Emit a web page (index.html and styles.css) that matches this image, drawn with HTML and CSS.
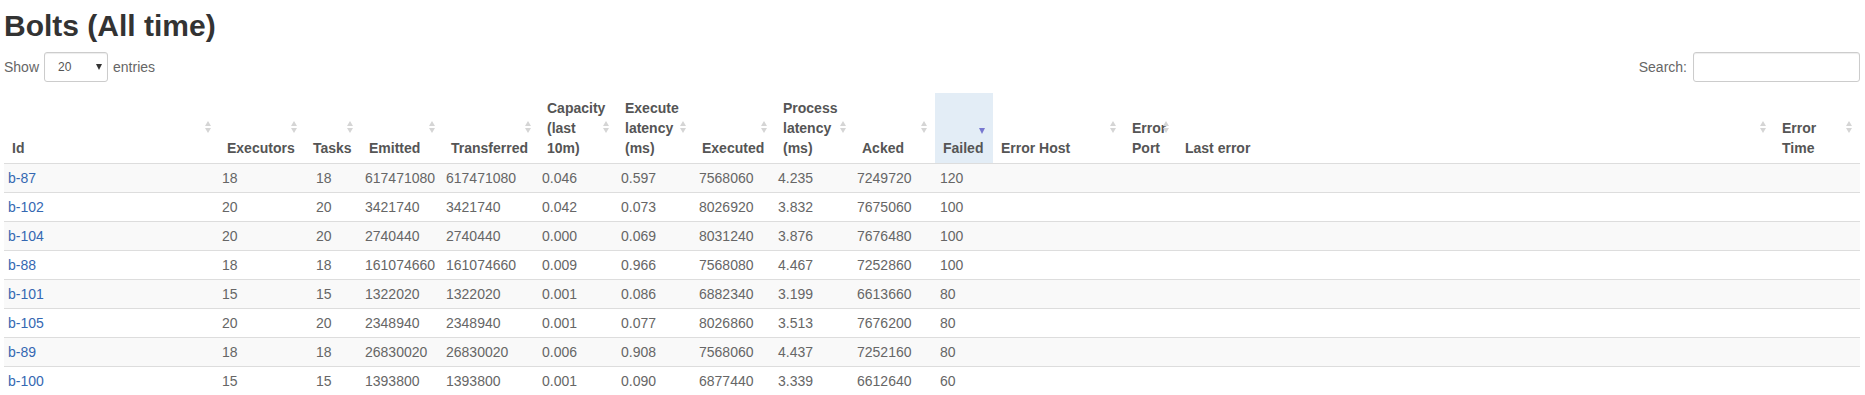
FILE: index.html
```html
<!DOCTYPE html>
<html lang="en">
<head>
<meta charset="utf-8">
<title>Bolts (All time)</title>
<link rel="stylesheet" href="styles.css">
</head>
<body>
<div class="page">
  <h2 class="title">Bolts (All time)</h2>
  <div class="controls">
    <label class="length">Show<span class="select-wrap"><select class="select"><option>20</option></select></span>entries</label>
    <label class="filter">Search:<input class="search" type="search"></label>
  </div>
  <div class="dt">
    <table class="dt-head">
      <colgroup>
        <col class="c-id"><col class="c-exec"><col class="c-tasks"><col class="c-emit"><col class="c-trans"><col class="c-cap"><col class="c-elat"><col class="c-executed"><col class="c-plat"><col class="c-acked"><col class="c-failed"><col class="c-ehost"><col class="c-eport"><col class="c-lerr"><col class="c-etime">
      </colgroup>
      <thead>
        <tr>
          <th class="sort">Id</th>
          <th class="sort">Executors</th>
          <th class="sort">Tasks</th>
          <th class="sort">Emitted</th>
          <th class="sort">Transferred</th>
          <th class="sort">Capacity (last 10m)</th>
          <th class="sort">Execute latency (ms)</th>
          <th class="sort">Executed</th>
          <th class="sort">Process latency (ms)</th>
          <th class="sort">Acked</th>
          <th class="sort-desc">Failed</th>
          <th class="sort">Error Host</th>
          <th class="sort">Error Port</th>
          <th class="sort">Last error</th>
          <th class="sort">Error Time</th>
        </tr>
      </thead>
    </table>
    <table class="dt-body">
      <colgroup>
        <col class="c-id"><col class="c-exec"><col class="c-tasks"><col class="c-emit"><col class="c-trans"><col class="c-cap"><col class="c-elat"><col class="c-executed"><col class="c-plat"><col class="c-acked"><col class="c-failed"><col class="c-ehost"><col class="c-eport"><col class="c-lerr"><col class="c-etime">
      </colgroup>
      <tbody>
        <tr><td><a href="#">b-87</a></td><td>18</td><td>18</td><td>617471080</td><td>617471080</td><td>0.046</td><td>0.597</td><td>7568060</td><td>4.235</td><td>7249720</td><td>120</td><td></td><td></td><td></td><td></td></tr>
        <tr><td><a href="#">b-102</a></td><td>20</td><td>20</td><td>3421740</td><td>3421740</td><td>0.042</td><td>0.073</td><td>8026920</td><td>3.832</td><td>7675060</td><td>100</td><td></td><td></td><td></td><td></td></tr>
        <tr><td><a href="#">b-104</a></td><td>20</td><td>20</td><td>2740440</td><td>2740440</td><td>0.000</td><td>0.069</td><td>8031240</td><td>3.876</td><td>7676480</td><td>100</td><td></td><td></td><td></td><td></td></tr>
        <tr><td><a href="#">b-88</a></td><td>18</td><td>18</td><td>161074660</td><td>161074660</td><td>0.009</td><td>0.966</td><td>7568080</td><td>4.467</td><td>7252860</td><td>100</td><td></td><td></td><td></td><td></td></tr>
        <tr><td><a href="#">b-101</a></td><td>15</td><td>15</td><td>1322020</td><td>1322020</td><td>0.001</td><td>0.086</td><td>6882340</td><td>3.199</td><td>6613660</td><td>80</td><td></td><td></td><td></td><td></td></tr>
        <tr><td><a href="#">b-105</a></td><td>20</td><td>20</td><td>2348940</td><td>2348940</td><td>0.001</td><td>0.077</td><td>8026860</td><td>3.513</td><td>7676200</td><td>80</td><td></td><td></td><td></td><td></td></tr>
        <tr><td><a href="#">b-89</a></td><td>18</td><td>18</td><td>26830020</td><td>26830020</td><td>0.006</td><td>0.908</td><td>7568060</td><td>4.437</td><td>7252160</td><td>80</td><td></td><td></td><td></td><td></td></tr>
        <tr><td><a href="#">b-100</a></td><td>15</td><td>15</td><td>1393800</td><td>1393800</td><td>0.001</td><td>0.090</td><td>6877440</td><td>3.339</td><td>6612640</td><td>60</td><td></td><td></td><td></td><td></td></tr>
      </tbody>
    </table>
  </div>
</div>
</body>
</html>
```
FILE: styles.css
```css
html {
  overflow: hidden;
}
body {
  margin: 0;
  font-family: "Liberation Sans", Arial, Helvetica, sans-serif;
  font-size: 14px;
  line-height: 20px;
  color: #666;
  background: #fff;
}
.page {
  padding: 0 5px 0 4px;
}
.title {
  margin: 9px 0 10px;
  font-size: 30px;
  line-height: 33px;
  font-weight: bold;
  color: #333;
}
.controls {
  display: flex;
  justify-content: space-between;
  align-items: center;
  height: 30px;
}
.length,
.filter {
  display: flex;
  align-items: center;
  font-weight: normal;
  color: #666;
}
.select-wrap {
  position: relative;
  display: inline-block;
  margin: 0 5px;
}
.select-wrap::after {
  content: "";
  position: absolute;
  left: 52px;
  top: 12px;
  border-left: 3.5px solid transparent;
  border-right: 3.5px solid transparent;
  border-top: 6px solid #333;
  pointer-events: none;
}
.select {
  -webkit-appearance: none;
  appearance: none;
  width: 64px;
  height: 30px;
  margin: 0;
  padding: 0 10px 0 13px;
  border: 1px solid #ccc;
  border-radius: 3px;
  background: #fff;
  font-family: "Liberation Sans", Arial, sans-serif;
  font-size: 12px;
  color: #555;
  box-shadow: inset 0 1px 1px rgba(0, 0, 0, .075);
}
.search {
  width: 167px;
  height: 30px;
  box-sizing: border-box;
  margin: 0 0 0 6px;
  padding: 5px 10px;
  border: 1px solid #ccc;
  border-radius: 3px;
  font-family: "Liberation Sans", Arial, sans-serif;
  font-size: 12px;
  box-shadow: inset 0 1px 1px rgba(0, 0, 0, .075);
}
.dt {
  margin-top: 11px;
}
.dt-head,
.dt-body {
  width: 100%;
  table-layout: fixed;
  border-collapse: separate;
  border-spacing: 0;
}

/* header column widths */
.dt-head .c-id { width: 215px; }
.dt-head .c-exec { width: 86px; }
.dt-head .c-tasks { width: 56px; }
.dt-head .c-emit { width: 82px; }
.dt-head .c-trans { width: 96px; }
.dt-head .c-cap { width: 78px; }
.dt-head .c-elat { width: 77px; }
.dt-head .c-executed { width: 81px; }
.dt-head .c-plat { width: 79px; }
.dt-head .c-acked { width: 81px; }
.dt-head .c-failed { width: 58px; }
.dt-head .c-ehost { width: 131px; }
.dt-head .c-eport { width: 53px; }
.dt-head .c-lerr { width: 597px; }
.dt-head .c-etime { width: 86px; }

/* body column widths */
.dt-body .c-id { width: 214px; }
.dt-body .c-exec { width: 94px; }
.dt-body .c-tasks { width: 49px; }
.dt-body .c-emit { width: 81px; }
.dt-body .c-trans { width: 96px; }
.dt-body .c-cap { width: 79px; }
.dt-body .c-elat { width: 78px; }
.dt-body .c-executed { width: 79px; }
.dt-body .c-plat { width: 79px; }
.dt-body .c-acked { width: 83px; }
.dt-body .c-failed { width: 57px; }
.dt-body .c-ehost { width: 131px; }
.dt-body .c-eport { width: 53px; }
.dt-body .c-lerr { width: 597px; }
.dt-body .c-etime { width: 86px; }

.dt-head th {
  position: relative;
  padding: 5px 10px 5px 8px;
  text-align: left;
  vertical-align: bottom;
  font-weight: bold;
  color: #555;
  border-bottom: 1px solid #ddd;
}
.dt-head th.sort::before,
.dt-head th.sort::after,
.dt-head th.sort-desc::after {
  content: "";
  position: absolute;
  right: 8px;
  top: 50%;
  border-left: 3px solid transparent;
  border-right: 3px solid transparent;
}
.dt-head th.sort::before {
  margin-top: -7px;
  border-bottom: 5px solid #d5d5d5;
}
.dt-head th.sort::after {
  margin-top: 0;
  border-top: 5px solid #d5d5d5;
}
.dt-head th.sort-desc {
  background: #e3edf6;
}
.dt-head th.sort-desc::after {
  margin-top: 0;
  border-top: 6px solid #7878d0;
  border-left-width: 3.5px;
  border-right-width: 3.5px;
}
.dt-body td {
  padding: 4px;
  height: 20px;
  white-space: nowrap;
  overflow: hidden;
  border-top: 1px solid #ddd;
  color: #666;
}
.dt-body tr:first-child td {
  border-top: 0;
}
.dt-body tr:nth-child(odd) td {
  background: #f9f9f9;
}
.dt-body a {
  color: #3568b2;
  text-decoration: none;
}
```
